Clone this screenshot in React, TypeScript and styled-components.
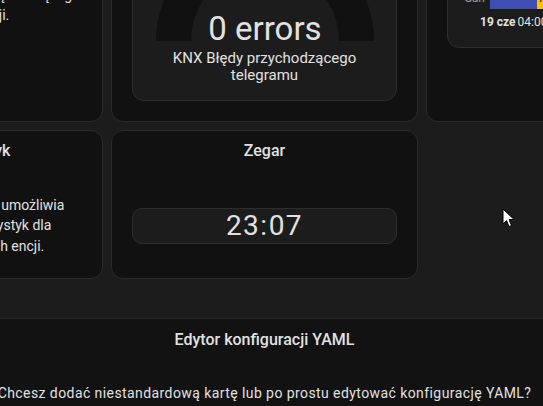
import React from 'react';
import styled, { createGlobalStyle } from 'styled-components';

const GlobalStyle = createGlobalStyle`
  html, body {
    margin: 0;
    padding: 0;
    background: #1c1c1c;
    overflow: hidden;
  }
  body {
    font-family: Roboto, "Noto Sans", sans-serif;
    color: #e1e1e1;
    -webkit-font-smoothing: antialiased;
  }
`;

const Page = styled.div`
  position: relative;
  width: 543px;
  height: 406px;
  display: flex;
  flex-direction: column;
  overflow: hidden;
`;

const Scroller = styled.div`
  height: 318px;
  display: flex;
  flex-direction: column;
  justify-content: flex-end;
  align-items: center;
  padding: 0 14px 39px 0;
  box-sizing: border-box;
  flex-shrink: 0;
`;

const CardGrid = styled.div`
  flex-shrink: 0;
  width: 937px;
  display: grid;
  grid-template-columns: repeat(3, 307px);
  grid-template-rows: auto 149px;
  gap: 8px;
`;

const PickerCard = styled.div<{ $empty?: boolean }>`
  display: flex;
  flex-direction: column;
  background: ${(p) => (p.$empty ? 'transparent' : '#111111')};
  border: 1px solid ${(p) => (p.$empty ? 'transparent' : '#2a2a2a')};
  border-radius: 12px;
  box-sizing: border-box;
  overflow: hidden;
`;

const CardName = styled.div`
  padding: 8px 16px 0;
  height: 24px;
  line-height: 24px;
  font-size: 16px;
  font-weight: 500;
  text-align: center;
  white-space: nowrap;
`;

const Preview = styled.div<{ $align?: string }>`
  flex: 1;
  display: flex;
  align-items: ${(p) => p.$align ?? 'center'};
  justify-content: center;
  padding: 10px 20px 0;
`;

const Description = styled.div`
  width: 100%;
  font-size: 14px;
  line-height: 20.5px;
  color: #e1e1e1;
`;

const DescLine = styled.div`
  white-space: nowrap;
`;

const InnerCard = styled.div<{ $height?: number }>`
  width: 100%;
  box-sizing: border-box;
  background: #1c1c1c;
  border: 1px solid #2e2e2e;
  border-radius: 12px;
  margin: 20px 0;
  overflow: hidden;
  height: ${(p) => (p.$height ? `${p.$height}px` : 'auto')};
`;

const GaugeBody = styled.div`
  display: flex;
  flex-direction: column;
  align-items: center;
  padding: 16px;
`;

const GaugeSvg = styled.svg`
  display: block;
  width: 230px;
  height: 115px;
`;

const GaugeName = styled.div`
  margin-top: 9px;
  font-size: 15px;
  line-height: 17px;
  text-align: center;
  width: 200px;
`;

const HistoryBody = styled.div`
  height: 100%;
  display: flex;
  flex-direction: column;
  justify-content: flex-end;
  padding: 0 0 17px;
  box-sizing: border-box;
`;

const TimelineRow = styled.div`
  display: flex;
  align-items: center;
  height: 22px;
`;

const TimelineLabel = styled.div`
  flex-shrink: 0;
  width: 42px;
  padding-right: 5px;
  box-sizing: border-box;
  text-align: right;
  font-size: 12px;
  color: #a0a0a0;
`;

const Segment = styled.div<{ $color: string; $width: number }>`
  width: ${(p) => p.$width}px;
  flex-shrink: 0;
  height: 100%;
  background: ${(p) => p.$color};
  color: #222;
  font-size: 12px;
  line-height: 22px;
  padding-left: 2px;
  box-sizing: border-box;
  overflow: hidden;
  white-space: nowrap;
`;

const Axis = styled.div`
  display: flex;
  gap: 2px;
  padding-left: 32px;
  margin-top: 5px;
  font-size: 12px;
  line-height: 16px;
  white-space: nowrap;
`;

const AxisDate = styled.span`
  font-weight: 700;
`;

const ClockBox = styled.div`
  width: 100%;
  height: 36px;
  box-sizing: border-box;
  background: #1c1c1c;
  border: 1px solid #2e2e2e;
  border-radius: 10px;
  display: flex;
  align-items: center;
  justify-content: center;
  font-size: 28px;
  letter-spacing: 1.5px;
  color: #e1e1e1;
`;

const YamlSection = styled.div`
  flex: 1;
  background: #121212;
  border-top: 1px solid #262626;
  display: flex;
  flex-direction: column;
  align-items: center;
  padding-right: 14px;
`;

const YamlTitle = styled.div`
  margin-top: 9px;
  font-size: 16px;
  font-weight: 500;
  line-height: 24px;
`;

const YamlText = styled.div`
  margin-top: 31px;
  font-size: 14px;
  letter-spacing: 0.42px;
  line-height: 20px;
  white-space: nowrap;
`;

const Cursor = styled.svg`
  position: absolute;
  left: 502px;
  top: 208px;
  width: 13px;
  height: 20px;
`;

const Gauge: React.FC<{ value: string; name: string }> = ({ value, name }) => (
  <GaugeBody>
    <GaugeSvg viewBox="0 0 230 115">
      <path d="M 23.5 115 A 91.5 91.5 0 0 1 206.5 115" fill="none" stroke="#111111" strokeWidth="35" />
      <text x="115" y="114" textAnchor="middle" fontSize="33" fill="#e1e1e1" fontFamily="Roboto, sans-serif">
        {value}
      </text>
    </GaugeSvg>
    <GaugeName>{name}</GaugeName>
  </GaugeBody>
);

export default function App() {
  return (
    <Page>
      <GlobalStyle />
      <Scroller>
        <CardGrid>
          <PickerCard>
            <CardName>Encja</CardName>
            <Preview>
              <Description>
                <DescLine>Karta encji daje szybki przegląd bieżącego</DescLine>
                <DescLine>stanu i atrybutu wybranej encji.</DescLine>
              </Description>
            </Preview>
          </PickerCard>
          <PickerCard>
            <CardName>Wskaźnik</CardName>
            <Preview>
              <InnerCard>
                <Gauge value="0 errors" name="KNX Błędy przychodzącego telegramu" />
              </InnerCard>
            </Preview>
          </PickerCard>
          <PickerCard>
            <CardName>Wykres historii</CardName>
            <Preview $align="flex-start">
              <InnerCard $height={139}>
                <HistoryBody>
                  <TimelineRow>
                    <TimelineLabel>Sun</TimelineLabel>
                    <Segment $color="#3d4fb3" $width={47} />
                    <Segment $color="#fcc108" $width={170}>Ponad horyzontem</Segment>
                  </TimelineRow>
                  <Axis>
                    <AxisDate>19 cze</AxisDate>
                    <span>04:00</span>
                  </Axis>
                </HistoryBody>
              </InnerCard>
            </Preview>
          </PickerCard>

          <PickerCard>
            <CardName>Wykres statystyk</CardName>
            <Preview>
              <Description>
                <DescLine>Karta wykresu statystyk encji umożliwia</DescLine>
                <DescLine>wyświetlanie wykresu ze statystyk dla</DescLine>
                <DescLine>każdej z Twoich wymienionych encji.</DescLine>
              </Description>
            </Preview>
          </PickerCard>
          <PickerCard>
            <CardName>Zegar</CardName>
            <Preview>
              <ClockBox>23:07</ClockBox>
            </Preview>
          </PickerCard>
          <PickerCard $empty />
        </CardGrid>
      </Scroller>
      <YamlSection>
        <YamlTitle>Edytor konfiguracji YAML</YamlTitle>
        <YamlText>Chcesz dodać niestandardową kartę lub po prostu edytować konfigurację YAML?</YamlText>
      </YamlSection>
      <Cursor viewBox="0 0 13 20">
        <path d="M1 1 L1 16 L4.5 12.5 L7 18.5 L9.5 17.5 L7 11.5 L12 11.5 Z" fill="#fff" stroke="#000" strokeWidth="1" />
      </Cursor>
    </Page>
  );
}
